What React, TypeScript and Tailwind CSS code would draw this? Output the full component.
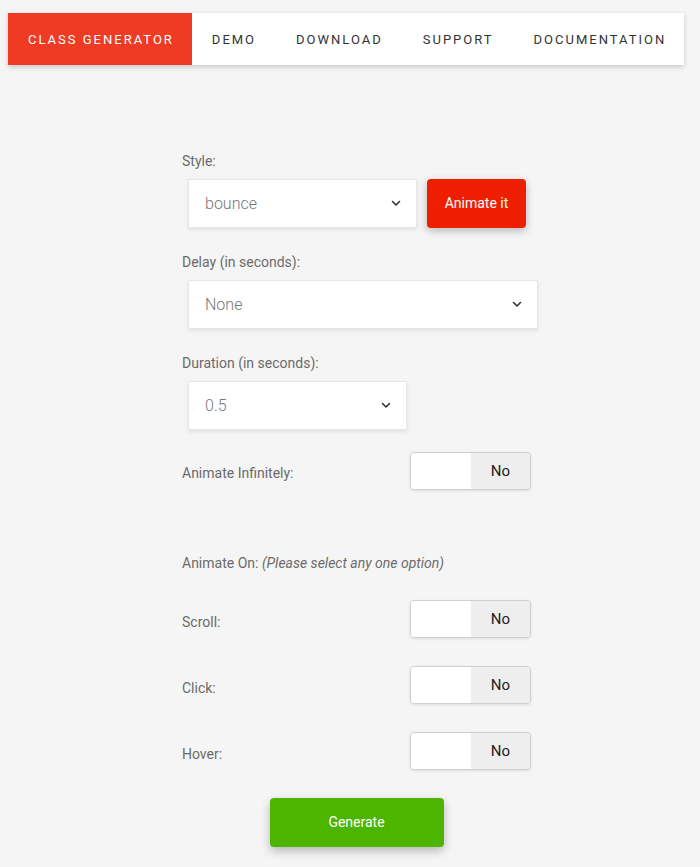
import React from "react";

const font = { fontFamily: "Roboto, 'Noto Sans', sans-serif" };

function Chevron() {
  return (
    <svg width="10" height="7" viewBox="0 0 10 7" className="shrink-0">
      <path d="M1.5 1.5 L5 5 L8.5 1.5" fill="none" stroke="#333" strokeWidth="1.6" strokeLinecap="round" strokeLinejoin="round" />
    </svg>
  );
}

function Select({ value, width }: { value: string; width: string }) {
  return (
    <div className={`ml-[6px] ${width} h-[49px] bg-white border border-[#e6e6e6] shadow-[0_2px_4px_rgba(0,0,0,0.08)] flex items-center justify-between pl-[16px] pr-[15px]`}>
      <span className="text-[16px] text-[#777] font-light">{value}</span>
      <Chevron />
    </div>
  );
}

function Label({ children }: { children: React.ReactNode }) {
  return <div className="h-[20px] flex items-center text-[14px] text-[#6b6b6b] whitespace-nowrap">{children}</div>;
}

function Toggle() {
  return (
    <div className="w-[121px] h-[38px] rounded-[4px] border border-[#cfcfcf] shadow-[0_1px_3px_rgba(0,0,0,0.1)] flex overflow-hidden">
      <div className="w-[60px] bg-white" />
      <div className="flex-1 bg-[#eeeeee] flex items-center justify-center text-[15px] text-[#222]">No</div>
    </div>
  );
}

function ToggleRow({ label, pt }: { label: string; pt: string }) {
  return (
    <div className="flex items-center justify-between">
      <div className={`text-[14px] text-[#6b6b6b] ${pt}`}>{label}</div>
      <Toggle />
    </div>
  );
}

export default function App() {
  return (
    <div className="min-h-[867px] bg-[#f5f5f5] pt-[13px]" style={font}>
      <nav className="ml-[8px] w-[676px] h-[52px] bg-white shadow-[0_2px_5px_rgba(0,0,0,0.18)] flex items-stretch text-[13px] tracking-[2px] uppercase whitespace-nowrap">
        <div className="bg-[#f03b24] text-white pl-[20px] pr-[18px] pt-[2px] flex items-center">Class Generator</div>
        <div className="text-[#333] px-[20px] pt-[2px] flex items-center">Demo</div>
        <div className="text-[#333] px-[20px] pt-[2px] flex items-center">Download</div>
        <div className="text-[#333] px-[20px] pt-[2px] flex items-center">Support</div>
        <div className="text-[#333] px-[20px] pt-[2px] flex items-center">Documentation</div>
      </nav>

      <div className="ml-[182px] w-[349px] mt-[86px] flex flex-col">
        <Label>Style:</Label>
        <div className="mt-[8px] flex items-center">
          <Select value="bounce" width="w-[229px]" />
          <button className="ml-[10px] w-[99px] h-[49px] rounded-[4px] bg-[#ee1f00] text-white text-[14px] shadow-[0_3px_8px_rgba(0,0,0,0.25)]">Animate it</button>
        </div>

        <div className="mt-[24px]"><Label>Delay (in seconds):</Label></div>
        <div className="mt-[8px]"><Select value="None" width="w-[350px]" /></div>

        <div className="mt-[24px]"><Label>Duration (in seconds):</Label></div>
        <div className="mt-[8px]"><Select value="0.5" width="w-[219px]" /></div>

        <div className="mt-[22px]"><ToggleRow label="Animate Infinitely:" pt="pt-[4px]" /></div>

        <div className="mt-[63px]">
          <Label>
            Animate On:&nbsp;<span className="italic">(Please select any one option)</span>
          </Label>
        </div>

        <div className="mt-[27px]"><ToggleRow label="Scroll:" pt="pt-[6px]" /></div>
        <div className="mt-[28px]"><ToggleRow label="Click:" pt="pt-[6px]" /></div>
        <div className="mt-[28px]"><ToggleRow label="Hover:" pt="pt-[6px]" /></div>

        <div className="mt-[28px] flex justify-center">
          <button className="w-[174px] h-[49px] rounded-[4px] bg-[#4bb500] text-white text-[14px] shadow-[0_4px_10px_rgba(0,0,0,0.25)]">Generate</button>
        </div>
      </div>
    </div>
  );
}
